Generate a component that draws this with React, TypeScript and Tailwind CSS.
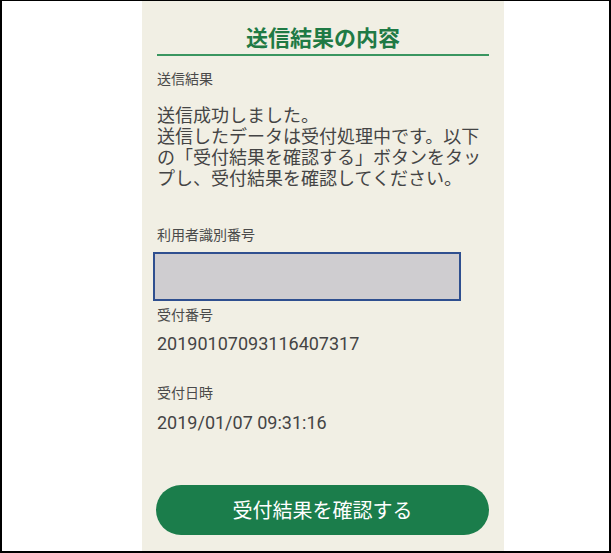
const font = {
  fontFamily: '"Noto Sans CJK JP", "Noto Sans", sans-serif',
};

function Label({ children, className = "" }: { children: React.ReactNode; className?: string }) {
  return (
    <div className={`px-[15px] text-[14px] leading-[20px] text-[#4a4a4a] ${className}`}>
      {children}
    </div>
  );
}

export default function App() {
  return (
    <div
      className="w-[611px] h-[553px] bg-white border-2 border-t border-black overflow-hidden"
      style={font}
    >
      <div className="ml-[140px] w-[362px] h-full bg-[#f1efe4] flex flex-col">
        <div className="mx-[15px] pt-[20px] pb-[3px] border-b-2 border-[#3a9660] text-center text-[22px] leading-[30px] font-bold text-[#1f7a45]">
          送信結果の内容
        </div>

        <Label className="mt-[12px]">送信結果</Label>

        <div className="mt-[16px] px-[15px] text-[18px] leading-[21px] text-[#444]">
          送信成功しました。
          <br />
          送信したデータは受付処理中です。以下の「受付結果を確認する」ボタンをタップし、受付結果を確認してください。
        </div>

        <Label className="mt-[36px]">利用者識別番号</Label>

        <div className="mt-[8px] ml-[11px] w-[308px] h-[49px] bg-[#cfcdd0] border-2 border-[#2f4f8f]" />

        <Label className="mt-[3px]">受付番号</Label>
        <div
          className="mt-[8px] px-[15px] text-[18px] leading-[24px] text-[#444]"
          style={{ fontFamily: 'Roboto, "Noto Sans CJK JP", sans-serif' }}
        >
          20190107093116407317
        </div>

        <Label className="mt-[26px]">受付日時</Label>
        <div
          className="mt-[9px] px-[15px] text-[18px] leading-[24px] text-[#444]"
          style={{ fontFamily: 'Roboto, "Noto Sans CJK JP", sans-serif' }}
        >
          2019/01/07 09:31:16
        </div>

        <button className="mt-[50px] ml-[14px] w-[333px] h-[50px] rounded-full bg-[#1b7d4b] text-white text-[20px] leading-[28px]">
          受付結果を確認する
        </button>
      </div>
    </div>
  );
}
